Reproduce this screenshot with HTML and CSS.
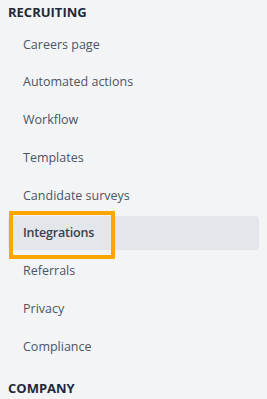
FILE: index.html
```html
<!DOCTYPE html>
<html lang="en">
<head>
    <meta charset="UTF-8">
    <meta name="viewport" content="width=device-width, initial-scale=1.0">
    <title>Settings menu</title>
    <link rel="stylesheet" href="styles.css">
</head>
<body>
    <nav class="side-menu">
        <h2 class="menu-title">Recruiting</h2>
        <ul class="menu-list">
            <li class="menu-item">Careers page</li>
            <li class="menu-item">Automated actions</li>
            <li class="menu-item">Workflow</li>
            <li class="menu-item">Templates</li>
            <li class="menu-item">Candidate surveys</li>
            <li class="menu-item active">
                Integrations
                <span class="highlight-box"></span>
            </li>
            <li class="menu-item">Referrals</li>
            <li class="menu-item">Privacy</li>
            <li class="menu-item">Compliance</li>
        </ul>
        <h2 class="menu-title company">Company</h2>
    </nav>
</body>
</html>
```

FILE: styles.css
```css
*{
    margin:0;
    padding:0;
    box-sizing: border-box;
}
body{
    background-color: #f3f4f6;
    font-family: "Open Sans", "Noto Sans", Arial, sans-serif;
    height:100vh;
    overflow: hidden;
}
/* SIDE MENU */
.side-menu{
    padding:0 8px;
}
.menu-title{
    font-size: 13px;
    font-weight: 700;
    color:#1f2937;
    text-transform: uppercase;
    line-height: 24px;
    height:27px;
}
.menu-title.company{
    margin-top:13px;
}
.menu-list{
    list-style: none;
    display:flex;
    flex-direction: column;
    gap:3.75px;
}
.menu-item{
    position: relative;
    height:34px;
    display:flex;
    align-items: center;
    padding-left:15px;
    font-size: 12.5px;
    color:#4b5563;
    border-radius: 4px;
}
.menu-item.active{
    background-color: #e3e6ea;
    color:#374151;
    font-weight: 600;
    letter-spacing: -0.2px;
}
/* ORANGE MARK */
.highlight-box{
    position: absolute;
    top:-5px;
    left:1px;
    width:106px;
    height:48px;
    border:4px solid #ffa500;
}
```
